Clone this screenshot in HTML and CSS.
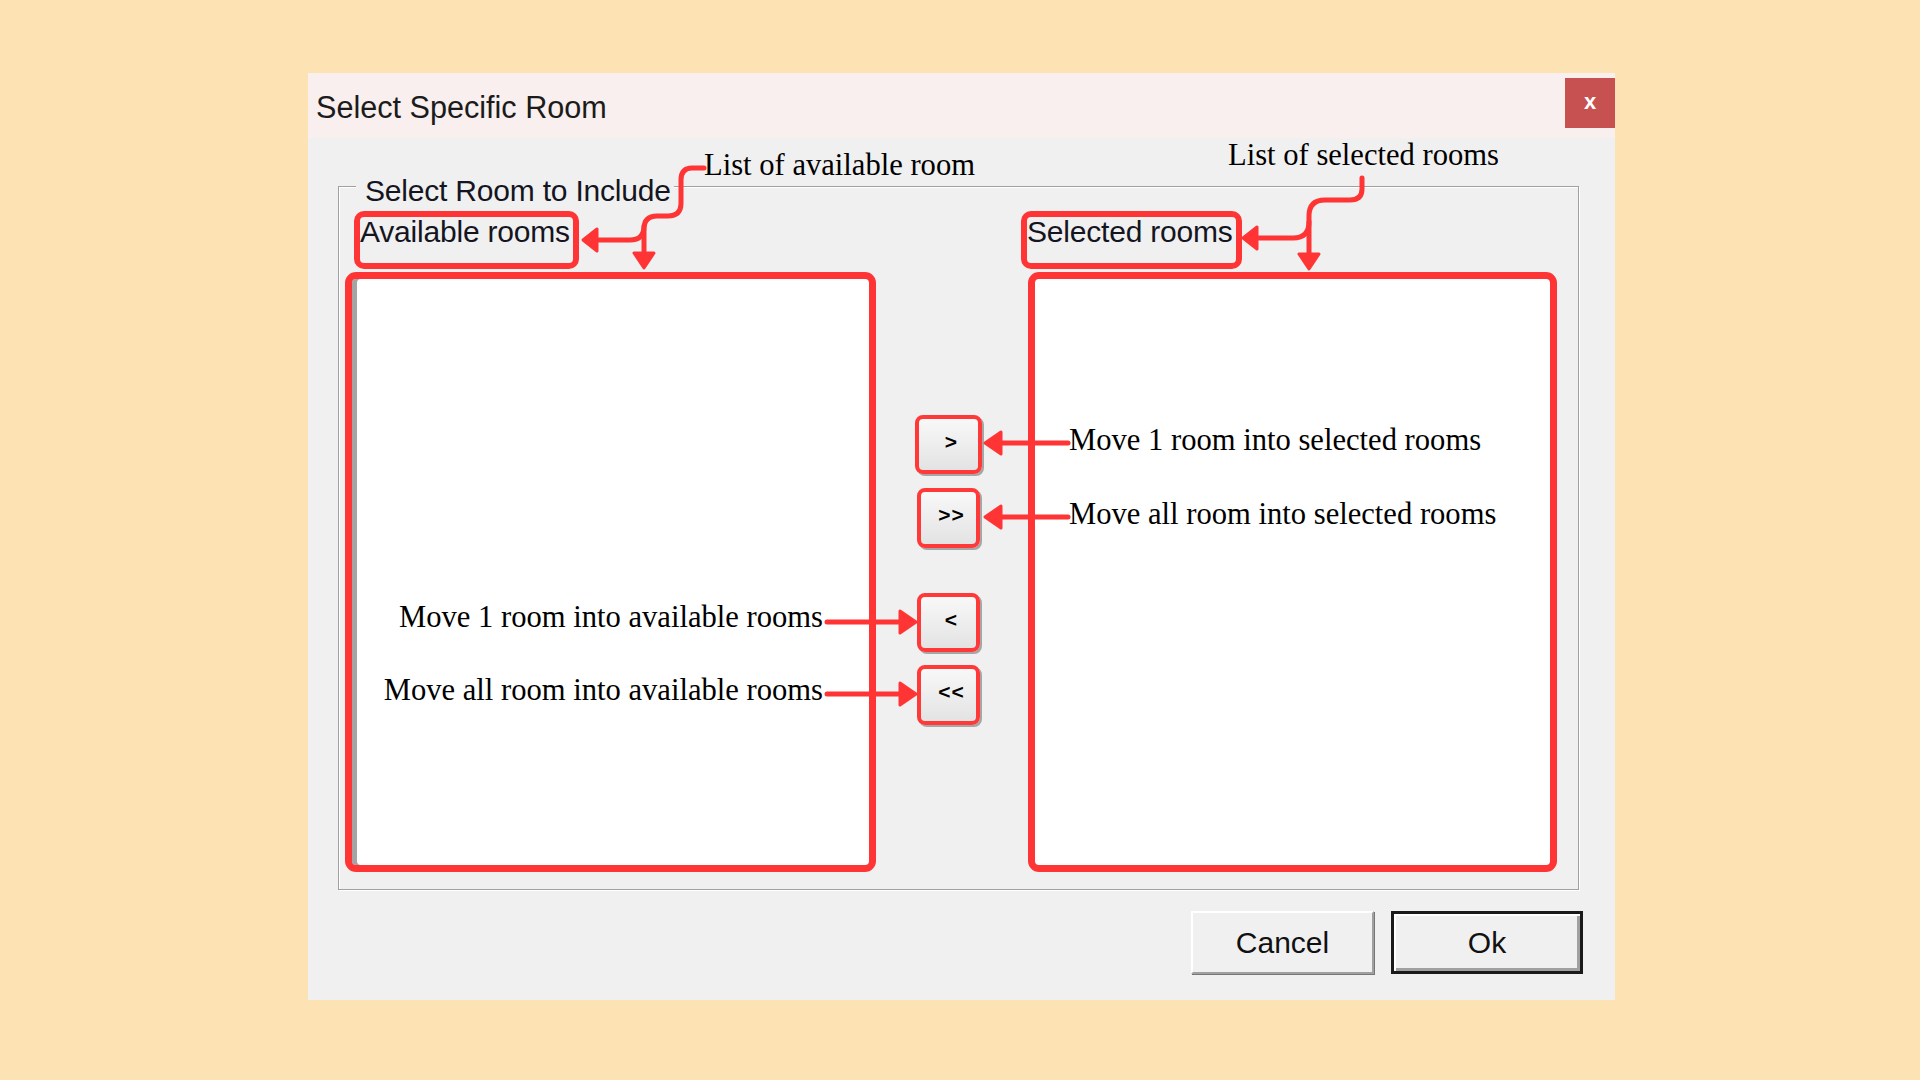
FILE: index.html
```html
<!DOCTYPE html>
<html lang="en">
<head>
<meta charset="utf-8">
<title>Select Specific Room</title>
<link rel="stylesheet" href="styles.css">
</head>
<body>
<div class="dialog">
  <div class="titlebar">
    <div class="title">Select Specific Room</div>
    <div class="close">x</div>
  </div>
  <div class="content">
    <div class="group">
      <div class="legend">Select Room to Include</div>
      <div class="columns">
        <div class="col col-left">
          <div class="label-box">Available rooms</div>
          <div class="list list-available"></div>
        </div>
        <div class="col-mid">
          <div class="mv mv-1">&gt;</div>
          <div class="mv mv-2 mv-double">&gt;&gt;</div>
          <div class="mv mv-3">&lt;</div>
          <div class="mv mv-4 mv-double">&lt;&lt;</div>
        </div>
        <div class="col col-right">
          <div class="label-box">Selected rooms</div>
          <div class="list list-selected"></div>
        </div>
      </div>
    </div>
    <div class="actions">
      <button class="btn btn-cancel">Cancel</button>
      <button class="btn btn-ok">Ok</button>
    </div>
  </div>
</div>

<div class="annotations">
  <svg class="connectors" width="1920" height="1080" viewBox="0 0 1920 1080" xmlns="http://www.w3.org/2000/svg">
    <g fill="none" stroke="#ff3434" stroke-width="5" stroke-linecap="round" stroke-linejoin="round">
      <path d="M704,168 H692 Q681,168 681,180 V203 Q681,216 668,216 H657 Q644,216 644,229 V256"/>
      <path d="M644,226 Q644,240 630,240 H596"/>
      <path d="M1362,178 V189 Q1362,200 1350,200 H1325 Q1309,200 1309,216 V256"/>
      <path d="M1309,222 Q1309,238 1293,238 H1256"/>
      <path d="M1068,443 H998"/>
      <path d="M1068,517 H998"/>
      <path d="M827,622 H903"/>
      <path d="M827,694 H903"/>
    </g>
    <g fill="#ff3434" stroke="#ff3434" stroke-width="3" stroke-linejoin="round">
      <polygon points="583,240 597,229 597,251"/>
      <polygon points="644,268 634,253 654,253"/>
      <polygon points="1243,238 1257,227 1257,249"/>
      <polygon points="1309,269 1299,254 1319,254"/>
      <polygon points="985,443 1001,432 1001,454"/>
      <polygon points="985,517 1001,506 1001,528"/>
      <polygon points="916,622 900,611 900,633"/>
      <polygon points="916,694 900,683 900,705"/>
    </g>
  </svg>
  <div class="note note-list-available">List of available room</div>
  <div class="note note-list-selected">List of selected rooms</div>
  <div class="note note-move-one-sel">Move 1 room into selected rooms</div>
  <div class="note note-move-all-sel">Move all room into selected rooms</div>
  <div class="note note-move-one-av">Move 1 room into available rooms</div>
  <div class="note note-move-all-av">Move all room into available rooms</div>
</div>
</body>
</html>
```
FILE: styles.css
```css
* { box-sizing: border-box; }
html, body { margin: 0; }
body {
  width: 1920px;
  height: 1080px;
  padding: 73px 0 0 308px;
  background: #fde2b4;
  overflow: hidden;
  position: relative;
  font-family: "Liberation Sans", Arial, sans-serif;
}
.dialog {
  width: 1307px;
  height: 927px;
  background: #f0f0f0;
  display: flex;
  flex-direction: column;
}
.titlebar {
  height: 65px;
  flex: none;
  background: #f8efee;
  display: flex;
  justify-content: space-between;
  align-items: flex-start;
}
.title {
  padding: 2px 0 0 8px;
  font-size: 30.6px;
  line-height: 64px;
  color: #1b1b1b;
}
.close {
  width: 50px;
  height: 50px;
  margin-top: 5px;
  background: #c75050;
  color: #fff;
  font-weight: bold;
  font-size: 22px;
  line-height: 47px;
  text-align: center;
}
.content {
  padding: 48px 36px 0 30px;
}
.group {
  border: 1px solid #a0a0a0;
  box-shadow: inset 1px 1px 0 #fff, 1px 1px 0 #fff;
  padding: 0 0 17px 0;
  display: flex;
  flex-direction: column;
}
.legend {
  align-self: flex-start;
  margin: -11px 0 0 17px;
  padding: 0 3px 0 9px;
  background: #f0f0f0;
  font-size: 30px;
  letter-spacing: -0.2px;
  line-height: 30px;
  color: #15151f;
}
.columns {
  display: flex;
  padding-left: 6px;
}
.col {
  display: flex;
  flex-direction: column;
  align-items: flex-start;
}
.col-left { width: 531px; }
.col-right { margin-left: 39px; }
.label-box {
  margin-top: 5px;
  height: 58px;
  border: 6px solid #ff3434;
  border-radius: 10px;
  padding: 0 3px 0 0;
  font-size: 30px;
  letter-spacing: -0.2px;
  line-height: 30px;
  color: #15151f;
  white-space: nowrap;
}
.col-left .label-box { margin-left: 9px; }
.list {
  margin-top: 3px;
  height: 600px;
  background: #fff;
  border: 7px solid #ff3434;
  border-radius: 11px;
}
.list-available {
  width: 531px;
  box-shadow: inset 5px 0 0 #a4a4a4;
}
.list-selected {
  width: 529px;
  margin-left: 7px;
}
.col-mid {
  width: 67px;
  margin-left: 39px;
  display: flex;
  flex-direction: column;
  align-items: center;
}
.mv {
  width: 63px;
  height: 59px;
  border: 4px solid #ff3838;
  border-radius: 8px;
  background: linear-gradient(#f8f8f8, #e3e3e3);
  box-shadow: 2px 2px 0 #a6a6a6;
  display: flex;
  align-items: center;
  justify-content: center;
  padding: 0 0 6px 5px;
  font-weight: bold;
  font-size: 21px;
  color: #000;
}
.mv-1 { width: 67px; margin-top: 209px; }
.mv-2 { margin-top: 14px; height: 60px; }
.mv-3 { margin-top: 45px; }
.mv-4 { margin-top: 13px; height: 60px; }
.mv-double { letter-spacing: 1px; padding-left: 6px; }
.actions {
  display: flex;
  justify-content: flex-end;
  gap: 17px;
  margin: 21px -4px 0 0;
}
.btn {
  height: 63px;
  padding: 0;
  font-family: "Liberation Sans", Arial, sans-serif;
  font-size: 30px;
  line-height: 57px;
  color: #111;
  background: #f0f0f0;
}
.btn-cancel {
  width: 183px;
  border: 2px solid;
  border-color: #fff #a0a0a0 #a0a0a0 #fff;
  box-shadow: 1px 1px 0 #777;
}
.btn-ok {
  width: 192px;
  border: 3px solid #1a1a1a;
  box-shadow: inset 2px 2px 0 #fff, inset -3px -3px 0 #a0a0a0;
}
.annotations {
  position: absolute;
  left: 0;
  top: 0;
  width: 1920px;
  height: 1080px;
  pointer-events: none;
}
.connectors {
  position: absolute;
  left: 0;
  top: 0;
}
.note {
  position: absolute;
  font-family: "Liberation Serif", "Times New Roman", serif;
  font-size: 30.6px;
  line-height: 30px;
  color: #000;
  white-space: nowrap;
}
.note-list-available { left: 704px; top: 150px; }
.note-list-selected { left: 1228px; top: 140px; }
.note-move-one-sel { left: 1069px; top: 425px; }
.note-move-all-sel { left: 1069px; top: 499px; }
.note-move-one-av { right: 1097px; top: 602px; }
.note-move-all-av { right: 1097px; top: 675px; }
```
